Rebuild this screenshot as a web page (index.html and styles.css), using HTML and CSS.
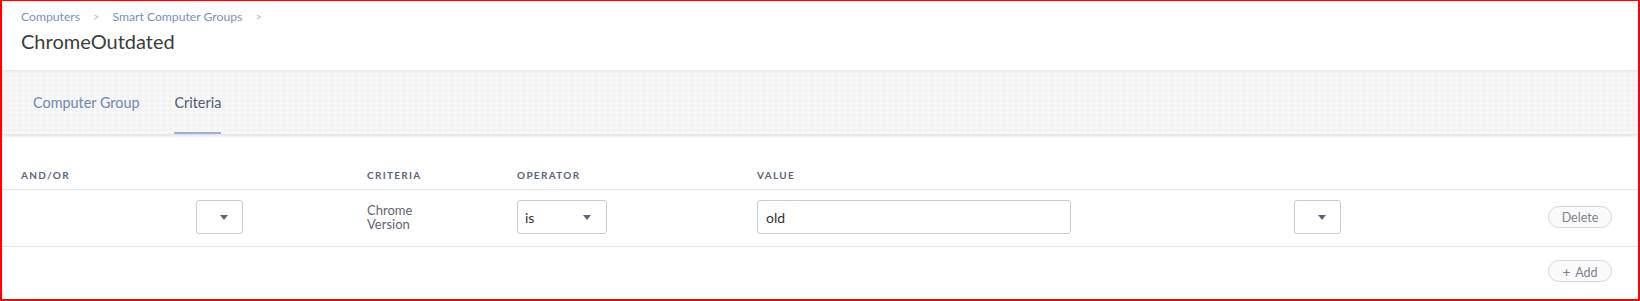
FILE: index.html
```html
<!DOCTYPE html>
<html lang="en">
<head>
  <meta charset="UTF-8" />
  <title>ChromeOutdated</title>
  <link rel="stylesheet" href="styles.css">
</head>
<body>
  <div class="frame">
    <header class="page-header">
      <nav class="crumbs">
        <a href="#">Computers</a>
        <span class="sep">&gt;</span>
        <a href="#">Smart Computer Groups</a>
        <span class="sep">&gt;</span>
      </nav>
      <h1 class="title">ChromeOutdated</h1>
    </header>

    <div class="tabs">
      <a href="#" class="tab">Computer Group</a>
      <a href="#" class="tab active">Criteria</a>
    </div>

    <div class="criteria">
      <div class="crit-row crit-head">
        <span>AND/OR</span>
        <span></span>
        <span>CRITERIA</span>
        <span>OPERATOR</span>
        <span>VALUE</span>
        <span></span>
        <span></span>
      </div>

      <div class="crit-row">
        <span></span>
        <div class="select small"><span class="caret"></span></div>
        <span class="crit-name">Chrome<br>Version</span>
        <div class="select op"><span>is</span><span class="caret"></span></div>
        <input type="text" class="value" value="old">
        <div class="select small"><span class="caret"></span></div>
        <button class="pill">Delete</button>
      </div>

      <div class="crit-foot">
        <button class="pill"><span class="plus">+</span> Add</button>
      </div>
    </div>
  </div>
</body>
</html>
```

FILE: styles.css
```css
* {
  box-sizing: border-box;
}

body {
  margin: 0;
  font-family: Lato, 'Open Sans', sans-serif;
  color: #444;
  background: #fff;
}

.frame {
  width: 1640px;
  height: 301px;
  border: solid #ff0000;
  border-width: 1px 2px 2px 2px;
  overflow: hidden;
}

.page-header {
  padding: 7px 19px 17px;
}

.crumbs {
  display: flex;
  align-items: center;
  height: 16px;
  font-size: 12.2px;
}

.crumbs a {
  color: #7d90b4;
  text-decoration: none;
}

.crumbs .sep {
  color: #b8c0cf;
  margin: 0 13px;
  font-size: 11px;
}

.title {
  margin: 5px 0 0;
  font-size: 20px;
  line-height: 24px;
  font-weight: 400;
  color: #3c3c3c;
}

.tabs {
  display: flex;
  gap: 35px;
  height: 64px;
  padding-left: 31px;
  background-color: #f3f3f3;
  background-image: radial-gradient(circle at 3px 3px, #f8f8f8 1.6px, transparent 2.2px);
  background-size: 6px 5px;
  box-shadow: inset 0 3px 4px -2px rgba(0, 0, 0, 0.07), 0 2px 3px rgba(0, 0, 0, 0.13);
  position: relative;
}

.tab {
  display: flex;
  align-items: center;
  padding-top: 3px;
  font-size: 14.4px;
  color: #6f87b0;
  text-decoration: none;
  border-bottom: 2px solid transparent;
}

.tab.active {
  color: #535c70;
  border-bottom-color: #9db1d6;
}

.crit-row {
  display: grid;
  grid-template-columns: 175px 171px 150px 240px 537px 1fr auto;
  align-items: center;
  padding: 0 26px 0 19px;
  border-bottom: 1px solid #e4e7ef;
}

.crit-head {
  padding-top: 35px;
  padding-bottom: 8px;
  font-size: 10px;
  line-height: 12px;
  font-weight: 700;
  letter-spacing: 1.3px;
  color: #5b6479;
}

.crit-row:not(.crit-head) {
  height: 57px;
  padding-bottom: 2px;
}

.select {
  display: flex;
  align-items: center;
  justify-content: space-between;
  height: 34px;
  padding: 0 14px 0 7px;
  border: 1px solid #c8ccd4;
  border-radius: 3px;
  background: #fff;
  font-size: 14px;
  color: #333;
}

.select.small {
  width: 47px;
  justify-content: flex-end;
}

.select.op {
  width: 90px;
  padding-right: 15px;
}

.caret {
  width: 0;
  height: 0;
  border-left: 4px solid transparent;
  border-right: 4px solid transparent;
  border-top: 5px solid #5b6479;
}

.crit-name {
  font-size: 13px;
  line-height: 14px;
  color: #5f6472;
}

.value {
  width: 314px;
  height: 34px;
  padding: 0 8px;
  border: 1px solid #c8ccd4;
  border-radius: 3px;
  font-family: inherit;
  font-size: 14px;
  color: #333;
  outline: none;
}

.pill {
  width: 64px;
  height: 22px;
  padding: 0;
  border: 1px solid #d3d7df;
  border-radius: 11px;
  background: #fafafa;
  font-family: inherit;
  font-size: 12.5px;
  color: #7c818c;
}

.plus {
  font-size: 14px;
  margin-right: 2px;
}

.crit-foot {
  display: flex;
  justify-content: flex-end;
  padding: 13px 26px 0 0;
}
```
